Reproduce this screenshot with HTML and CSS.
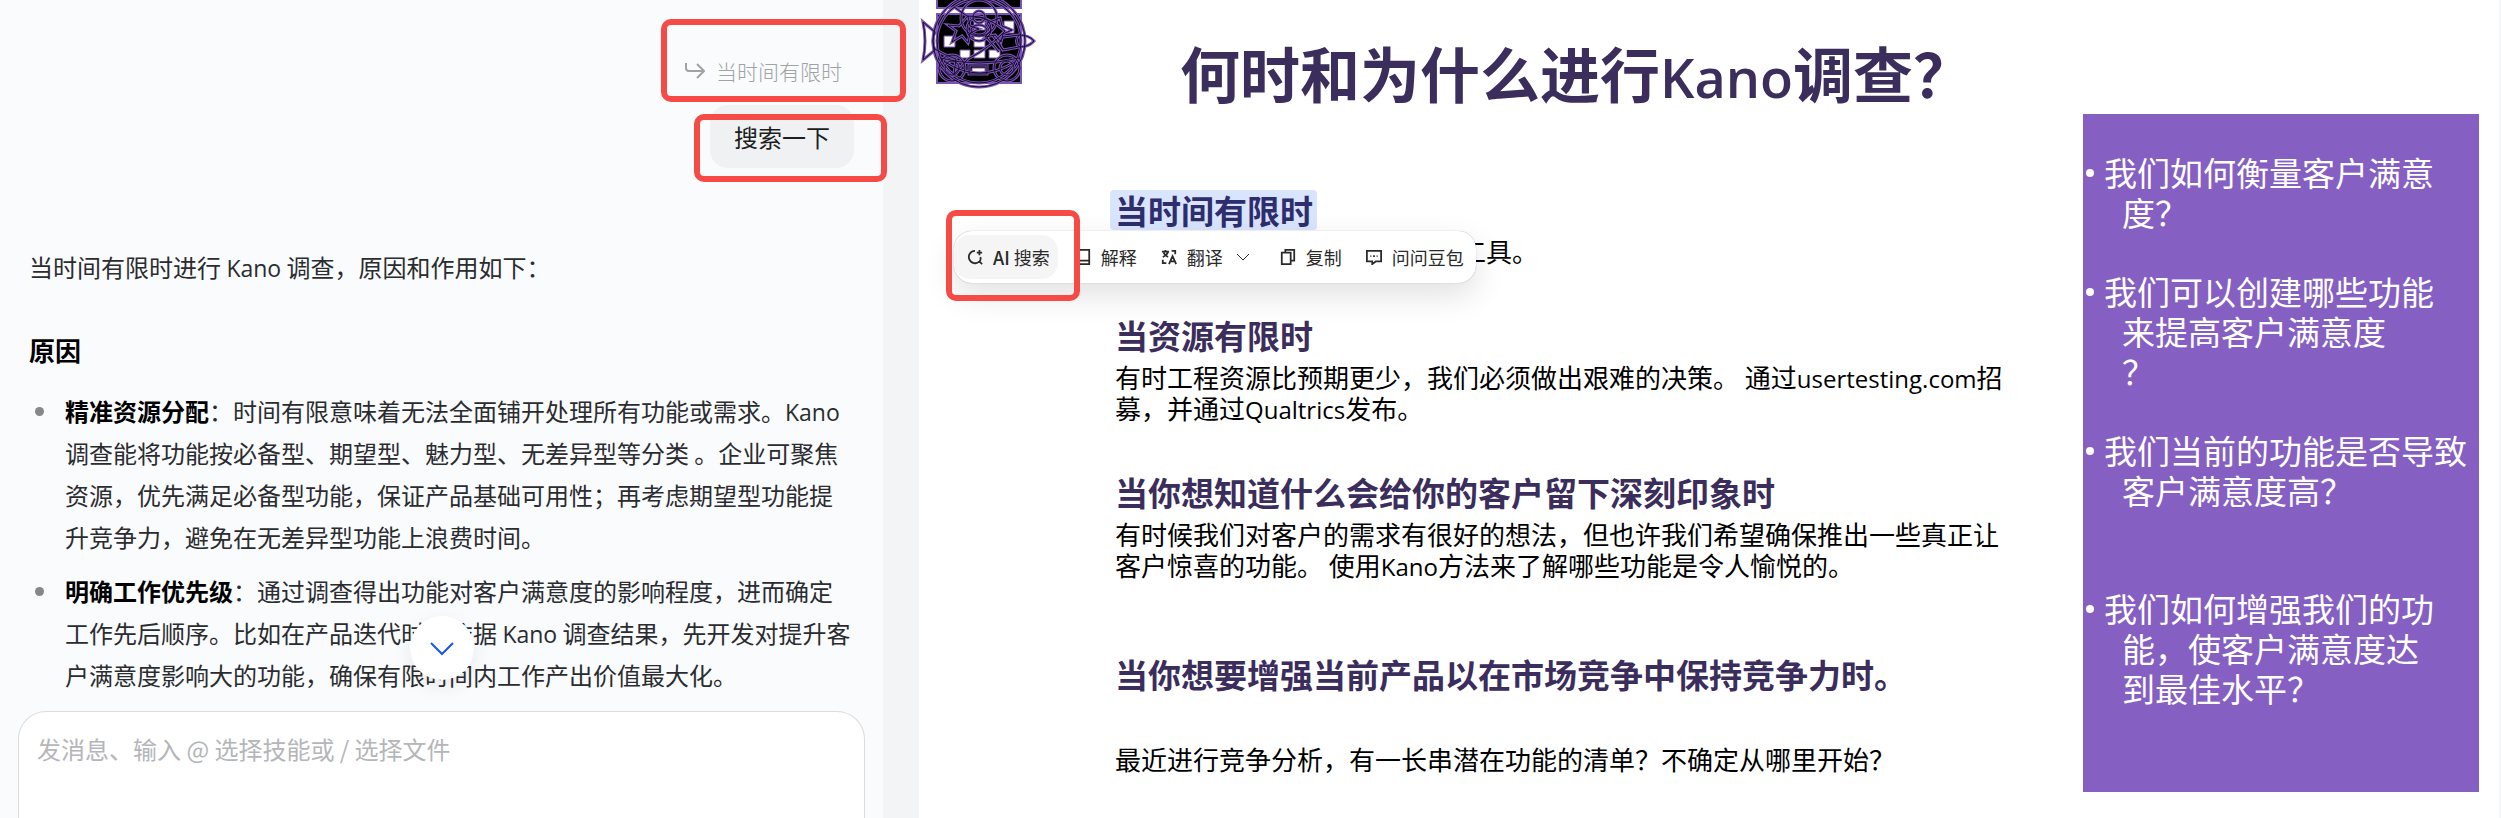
FILE: index.html
```html
<!DOCTYPE html>
<html lang="zh-CN">
<head>
    <meta charset="UTF-8">
    <meta name="viewport" content="width=device-width, initial-scale=1.0">
    <title>何时和为什么进行Kano调查？</title>
    <link rel="stylesheet" href="styles.css">
</head>
<body>
    <aside class="chat">
        <div class="messages">
            <div class="quote marked quote-mark">
                <svg class="quote-icon" viewBox="0 0 20 18"><path d="M1 1v5q0 3 3 3h14M12 2l7 7-7 7"/></svg>
                <span>当时间有限时</span>
            </div>
            <div class="question marked question-mark">搜索一下</div>

            <div class="answer">
                <p>当时间有限时进行 <span class="latin">Kano</span> 调查，原因和作用如下：</p>
                <h3>原因</h3>
                <ul>
                    <li><strong>精准资源分配</strong>：时间有限意味着无法全面铺开处理所有功能或需求。<span class="latin">Kano</span><br>
                        调查能将功能按必备型、期望型、魅力型、无差异型等分类 。企业可聚焦<br>
                        资源，优先满足必备型功能，保证产品基础可用性；再考虑期望型功能提<br>
                        升竞争力，避免在无差异型功能上浪费时间。</li>
                    <li><strong>明确工作优先级</strong>：通过调查得出功能对客户满意度的影响程度，进而确定<br>
                        工作先后顺序。比如在产品迭代时，依据 <span class="latin">Kano</span> 调查结果，先开发对提升客<br>
                        户满意度影响大的功能，确保有限时间内工作产出价值最大化。</li>
                </ul>
            </div>
        </div>
        <div class="composer">
            <button class="scroll-down" type="button" aria-label="回到底部">
                <svg viewBox="0 0 24 14"><path d="M1 1l11 11L23 1"/></svg>
            </button>
            <textarea aria-label="发消息" placeholder="发消息、输入 @ 选择技能或 / 选择文件"></textarea>
        </div>
    </aside>

    <main class="slide">
        <svg class="logo" viewBox="0 0 116 90">
            <path class="solid" d="M17-4h84V8H17zM17 14h84v69H17z"/>
            <path class="windows" d="M24 36h11v11H24zM54 21h11v9H54zM54 36h11v11H54zM84 21h10v12H84zM40 50h10v8H40zM54 50h11v8H54zM69 50h11v8H69zM52 68h13v5H52z"/>
            <!-- dark core under a purple outline -->
            <g class="lines">
                <g id="fish">
                    <circle cx="59" cy="41" r="46"/>
                    <circle cx="59" cy="41" r="42"/>
                    <circle cx="59" cy="18" r="18"/>
                    <circle cx="59" cy="17" r="6"/>
                    <path d="M3 22l12 10q-4 9 0 18L3 60q4-19 0-38z"/>
                    <path d="M34 7l13 9q20-1 38 15-14 16-37 28l-14 15 2-15q-12-4-21-10"/>
                    <path d="M39 26l9-10 2 10 9 3-9 4-2 10-6-7-10 6 4-11-8-6zM80 18l2 8 10 4-9 4-2 8-6-7-10 2 6-7-4-7z"/>
                    <circle cx="59" cy="29" r="12"/>
                    <ellipse cx="59" cy="30" rx="8" ry="5"/>
                    <path d="M83 37l16-2q10 0 15 6-5 6-15 6l-16 3-4-7zM99 35q-5 6 0 12"/>
                    <circle cx="32" cy="68" r="13"/>
                    <circle cx="32" cy="68" r="7"/>
                    <circle cx="87" cy="68" r="13"/>
                    <circle cx="87" cy="68" r="7"/>
                    <path d="M20 58q39 10 79 0M25 62q34 22 70 0M49 65h18v9H49zM67 38l12 14M73 36l10 14"/>
                </g>
            </g>
            <use class="core" href="#fish"/>
        </svg>

        <h1>何时和为什么进行<span class="latin">Kano</span>调查？</h1>

        <div class="columns">
            <div class="points">
                <section>
                    <h2><mark>当时间有限时</mark></h2>
                    <p class="covered">工具。</p>
                    <div class="toolbar">
                        <button class="active marked ai-mark" type="button">
                            <svg viewBox="0 0 18 18"><path d="M9 2a7 7 0 1 0 5 12l3 3M15 9q1 3-1 5M14 1v6M11 4h6"/></svg>
                            <span><b>AI</b> 搜索</span>
                        </button>
                        <button type="button">
                            <svg viewBox="0 0 18 18"><path d="M3 1h13v12H3zM3 13v4h13v-4"/></svg>
                            <span>解释</span>
                        </button>
                        <button type="button">
                            <svg viewBox="0 0 18 18"><path d="M1 3h8M5 1v2M2 9q5-2 6-6M3 4q2 4 5 5M12 2h4v4M2 12v4h4M9 17l4-9 4 9M11 14h5"/></svg>
                            <span>翻译</span>
                            <svg class="caret" viewBox="0 0 14 8"><path d="M1 1l6 6 6-6"/></svg>
                        </button>
                        <button type="button">
                            <svg viewBox="0 0 18 18"><path d="M6 4V1h10v12h-4M2 4h10v13H2z"/></svg>
                            <span>复制</span>
                        </button>
                        <button type="button">
                            <svg viewBox="0 0 18 18"><path d="M1 2h16v12h-6l-4 3v-3H1zM5 8h1M8 8h2M12 8h1"/></svg>
                            <span>问问豆包</span>
                        </button>
                    </div>
                </section>
                <section>
                    <h2>当资源有限时</h2>
                    <p>有时工程资源比预期更少，我们必须做出艰难的决策。 通过<span class="latin">usertesting.com</span>招<br>
                        募，并通过<span class="latin">Qualtrics</span>发布。</p>
                </section>
                <section>
                    <h2>当你想知道什么会给你的客户留下深刻印象时</h2>
                    <p>有时候我们对客户的需求有很好的想法，但也许我们希望确保推出一些真正让<br>
                        客户惊喜的功能。 使用<span class="latin">Kano</span>方法来了解哪些功能是令人愉悦的。</p>
                </section>
                <section class="last">
                    <h2>当你想要增强当前产品以在市场竞争中保持竞争力时。</h2>
                    <p>最近进行竞争分析，有一长串潜在功能的清单？不确定从哪里开始？</p>
                </section>
            </div>

            <ul class="questions">
                <li>我们如何衡量客户满意<br>度？</li>
                <li>我们可以创建哪些功能<br>来提高客户满意度<br>？</li>
                <li>我们当前的功能是否导致<br>客户满意度高？</li>
                <li class="spaced">我们如何增强我们的功<br>能，使客户满意度达<br>到最佳水平？</li>
            </ul>
        </div>
    </main>
</body>
</html>
```
FILE: styles.css
```css
* { box-sizing: border-box; }
body { margin: 0; min-height: 100vh; display: flex; background: #fff; font-family: "Noto Sans CJK SC", sans-serif; color: #000; }
h1, h2, h3, p, ul { margin: 0; padding: 0; }
ul { list-style: none; }
svg { fill: none; stroke: currentColor; flex: none; }
button { font: inherit; color: inherit; border: 0; background: none; padding: 0; cursor: pointer; }
.latin { font-family: "Open Sans", "Noto Sans", sans-serif; line-height: 1; }

/* red callout frames */
.marked { position: relative; }
.marked::after { content: ""; position: absolute; border: 6px solid #f54a45; border-radius: 10px; z-index: 3; pointer-events: none; }
.quote-mark::after { inset: -34px -64px -14px -24px; }
.question-mark::after { inset: 9px -33px -14px -16px; }
.ai-mark::after { inset: -25px -22px -22px -8px; }

/* chat panel */
.chat { position: relative; z-index: 1; width: 919px; height: 100vh; flex: none; display: flex; flex-direction: column; justify-content: space-between; background: #fafbfd; border-right: 36px solid #f3f4f6; }
.messages { padding: 53px 29px 0 29px; display: flex; flex-direction: column; align-items: flex-end; }
.quote { display: flex; align-items: center; gap: 11px; height: 35px; margin-right: 12px; font-size: 21px; font-weight: 300; color: #a0a2a5; }
.quote-icon { width: 20px; height: 18px; stroke-width: 2; }
.question { height: 63px; margin-top: 17px; padding: 0 24px; border-radius: 18px; background: #eff1f2; font-size: 24px; line-height: 64px; color: #1c1e21; }
.answer { width: 100%; margin-top: 78px; font-size: 24px; line-height: 42px; color: #2a2c30; white-space: nowrap; }
.answer .latin { font-size: 23px; }
.answer h3 { margin: 41px 0 19px; font-size: 26px; line-height: 42px; color: #000; }
.answer li { position: relative; padding-left: 36px; margin-bottom: 12px; }
.answer li::before { content: ""; position: absolute; left: 6px; top: 17px; width: 9px; height: 9px; border-radius: 50%; background: #85878a; }
.answer strong { font-weight: 700; color: #000; }

.composer { position: relative; margin: 0 18px; }
.composer textarea { display: block; width: 100%; height: 107px; padding: 18px; border: 1px solid #dadce0; border-bottom: 0; border-radius: 28px 28px 0 0; background: #fff; resize: none; font: 24px/38px "Noto Sans CJK SC", sans-serif; }
.composer textarea::placeholder { color: #b4b6b9; }
.scroll-down { position: absolute; left: 50%; bottom: 138px; width: 64px; height: 64px; margin-left: -32px; border-radius: 50%; background: #fff; box-shadow: 0 6px 20px rgba(0, 0, 0, .08); color: #1456f0; }
.scroll-down svg { width: 24px; height: 14px; stroke-width: 2; display: block; margin: 2px auto 0; }

/* slide */
.slide { position: relative; z-index: 2; flex: 1; border-right: 2px solid #f5f6f9; }
.logo { position: absolute; left: 1px; top: 0; width: 116px; height: 90px; }
.logo .solid { fill: #000; stroke: #7a55b5; stroke-width: 2; }
.logo .windows { fill: #fff; stroke: #7a55b5; }
.logo .lines { stroke: #7a55b5; stroke-width: 3; }
.logo .core { stroke: #180c30; stroke-width: 1; }
.slide h1 { height: 114px; padding: 32px 0 0 261px; font-size: 60px; line-height: 80px; font-weight: 600; color: #3b2d5c; }
.slide h1 .latin { font-size: 54px; font-weight: 600; }
.columns { display: flex; justify-content: space-between; padding-right: 20px; }
.points { padding: 76px 0 0 196px; white-space: nowrap; }
.points section { position: relative; height: 125px; }
.points section + section { height: 157px; }
.points section:nth-child(3) { height: 182px; }
.points h2 { font-size: 33px; line-height: 40px; font-weight: 600; color: #3b2d5c; }
.points p { font-size: 26px; line-height: 31px; padding-top: 6px; }
.points p .latin { font-size: 24px; }
.points .last p { padding-top: 49px; }
.points mark { display: inline-block; margin-left: -5px; padding: 0 4px 0 5px; border-radius: 4px; background: #d9e4ff; color: #2e2d6d; }
.points .covered { padding: 5px 0 0 345px; }

.toolbar { position: absolute; left: -161px; top: 41px; z-index: 2; height: 52px; display: flex; align-items: center; gap: 24px; padding-right: 12px; border-radius: 18px; background: #fff; box-shadow: 0 0 1px rgba(0, 0, 0, .4), 0 12px 32px rgba(0, 0, 0, .12); font-size: 18px; color: #2a2a2a; }
.toolbar button { display: flex; align-items: center; gap: 10px; }
.toolbar svg { width: 16px; height: 16px; stroke-width: 2; }
.toolbar .caret { width: 14px; height: 8px; stroke-width: 1; margin: 0 6px 0 3px; }
.toolbar .active { height: 44px; margin-right: -7px; padding: 0 8px 0 13px; border-radius: 16px; background: #f5f5f5; }
.toolbar b { font-weight: 500; }

.questions { width: 396px; height: 678px; padding: 38px 0 0 21px; background: #8560c2; color: #fff; font-size: 33px; line-height: 40px; white-space: nowrap; }
.questions li { position: relative; padding-left: 18px; margin-bottom: 39px; text-indent: -18px; }
.questions li::before { content: ""; position: absolute; left: -18px; top: 17px; width: 8px; height: 8px; border-radius: 50%; background: #fff; }
.questions .spaced { margin-top: 78px; }
```
